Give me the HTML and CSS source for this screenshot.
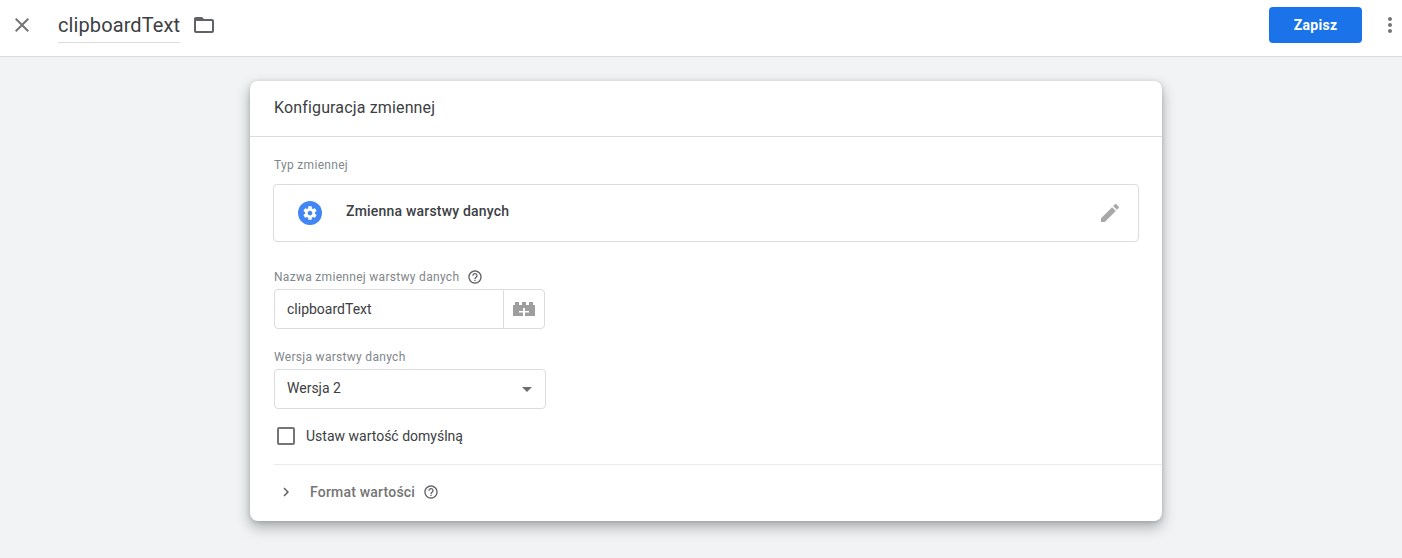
FILE: index.html
```html
<!DOCTYPE html>
<html lang="pl">
<head>
    <meta charset="UTF-8">
    <title>clipboardText</title>
    <link rel="stylesheet" href="styles.css">
</head>
<body>

    <div class="topbar">
        <svg class="close-icon" width="24" height="24" viewBox="0 0 24 24">
            <path d="M19 6.41L17.59 5 12 10.59 6.41 5 5 6.41 10.59 12 5 17.59 6.41 19 12 13.41 17.59 19 19 17.59 13.41 12z"/>
        </svg>
        <div class="name-field">clipboardText</div>
        <svg class="folder-icon" width="24" height="24" viewBox="0 0 24 24">
            <path d="M20 6h-8l-2-2H4c-1.1 0-1.99.9-1.99 2L2 18c0 1.1.9 2 2 2h16c1.1 0 2-.9 2-2V8c0-1.1-.9-2-2-2zm0 12H4V8h16v10z"/>
        </svg>
        <div class="topbar-right">
            <button class="save-btn">Zapisz</button>
            <svg class="more-icon" width="24" height="24" viewBox="0 0 24 24">
                <path d="M12 8c1.1 0 2-.9 2-2s-.9-2-2-2-2 .9-2 2 .9 2 2 2zm0 2c-1.1 0-2 .9-2 2s.9 2 2 2 2-.9 2-2-.9-2-2-2zm0 6c-1.1 0-2 .9-2 2s.9 2 2 2 2-.9 2-2-.9-2-2-2z"/>
            </svg>
        </div>
    </div>

    <div class="main">
        <div class="card">
            <div class="card-header">Konfiguracja zmiennej</div>

            <div class="card-body">
                <div class="label">Typ zmiennej</div>
                <div class="type-box">
                    <span class="type-badge">
                        <svg width="16" height="16" viewBox="0 0 24 24">
                            <path d="M19.43 12.98c.04-.32.07-.64.07-.98s-.03-.66-.07-.98l2.11-1.65c.19-.15.24-.42.12-.64l-2-3.46c-.12-.22-.39-.3-.61-.22l-2.49 1c-.52-.4-1.08-.73-1.69-.98l-.38-2.65C14.46 2.18 14.25 2 14 2h-4c-.25 0-.46.18-.49.42l-.38 2.65c-.61.25-1.17.59-1.69.98l-2.49-1c-.23-.09-.49 0-.61.22l-2 3.46c-.13.22-.07.49.12.64l2.11 1.65c-.04.32-.07.65-.07.98s.03.66.07.98l-2.11 1.65c-.19.15-.24.42-.12.64l2 3.46c.12.22.39.3.61.22l2.49-1c.52.4 1.08.73 1.69.98l.38 2.65c.03.24.24.42.49.42h4c.25 0 .46-.18.49-.42l.38-2.65c.61-.25 1.17-.59 1.69-.98l2.49 1c.23.09.49 0 .61-.22l2-3.46c.12-.22.07-.49-.12-.64l-2.11-1.65zM12 15.5c-1.93 0-3.5-1.57-3.5-3.5s1.57-3.5 3.5-3.5 3.5 1.57 3.5 3.5-1.57 3.5-3.5 3.5z"/>
                        </svg>
                    </span>
                    <span class="type-name">Zmienna warstwy danych</span>
                    <svg class="edit-icon" width="24" height="24" viewBox="0 0 24 24">
                        <path d="M3 17.25V21h3.75L17.81 9.94l-3.75-3.75L3 17.25zM20.71 7.04c.39-.39.39-1.02 0-1.41l-2.34-2.34c-.39-.39-1.02-.39-1.41 0l-1.83 1.83 3.75 3.75 1.83-1.83z"/>
                    </svg>
                </div>

                <div class="label label-help">
                    Nazwa zmiennej warstwy danych
                    <svg class="help-icon" width="16" height="16" viewBox="0 0 24 24">
                        <path d="M11 18h2v-2h-2v2zm1-16C6.48 2 2 6.48 2 12s4.48 10 10 10 10-4.48 10-10S17.52 2 12 2zm0 18c-4.41 0-8-3.59-8-8s3.59-8 8-8 8 3.59 8 8-3.59 8-8 8zm0-14c-2.21 0-4 1.79-4 4h2c0-1.1.9-2 2-2s2 .9 2 2c0 2-3 1.75-3 5h2c0-2.25 3-2.5 3-5 0-2.21-1.79-4-4-4z"/>
                    </svg>
                </div>
                <div class="name-input">
                    <span class="name-input-text">clipboardText</span>
                    <span class="name-input-btn">
                        <svg width="22" height="14" viewBox="0 0 22 14">
                            <path d="M2 0h4v3h3V0h4v3h3V0h4v3h2v11H0V3h2z"/>
                            <path class="brick-plus" d="M10 6h2v3h4v1.500h-4V14h-2v-3.500H6V9h4z"/>
                        </svg>
                    </span>
                </div>

                <div class="label label-version">Wersja warstwy danych</div>
                <div class="select-box">
                    Wersja 2
                    <span class="select-arrow"></span>
                </div>

                <div class="check-row">
                    <span class="checkbox"></span>
                    Ustaw wartość domyślną
                </div>
            </div>

            <div class="format-row">
                <svg class="chevron-icon" width="18" height="18" viewBox="0 0 24 24">
                    <path d="M10 6L8.590 7.410 13.170 12l-4.580 4.590L10 18l6-6z"/>
                </svg>
                <span class="format-title">Format wartości</span>
                <svg class="help-icon" width="16" height="16" viewBox="0 0 24 24">
                    <path d="M11 18h2v-2h-2v2zm1-16C6.480 2 2 6.480 2 12s4.480 10 10 10 10-4.480 10-10S17.520 2 12 2zm0 18c-4.410 0-8-3.590-8-8s3.590-8 8-8 8 3.590 8 8-3.590 8-8 8zm0-14c-2.210 0-4 1.790-4 4h2c0-1.100.9-2 2-2s2 .9 2 2c0 2-3 1.750-3 5h2c0-2.250 3-2.500 3-5 0-2.210-1.790-4-4-4z"/>
                </svg>
            </div>
        </div>
    </div>

</body>
</html>
```

FILE: styles.css
```css
* {
    margin: 0;
    padding: 0;
    box-sizing: border-box;
}

html, body {
    height: 100%;
    overflow: hidden;
}

body {
    background: #f1f3f4;
    color: #202124;
    font-family: Roboto, "Liberation Sans", sans-serif;
    font-size: 14px;
}

svg {
    display: block;
    flex: none;
}

/* top bar */
.topbar {
    display: flex;
    align-items: center;
    height: 57px;
    padding: 0 0 7px 10px;
    background: #fff;
    border-bottom: 1px solid #dadce0;
}

.close-icon {
    fill: #757575;
    margin-right: 24px;
}

.name-field {
    height: 36px;
    font-size: 20px;
    line-height: 36px;
    letter-spacing: 0.1px;
    color: #3c4043;
    border-bottom: 1px solid #dadce0;
}

.folder-icon {
    fill: #5f6368;
    margin-left: 12px;
}

.topbar-right {
    display: flex;
    align-items: center;
    margin-left: auto;
}

.save-btn {
    width: 93px;
    height: 36px;
    background: #1a73e8;
    color: #fff;
    border: none;
    border-radius: 4px;
    font-family: inherit;
    font-size: 14px;
    font-weight: 700;
    letter-spacing: 0.3px;
}

.more-icon {
    fill: #757575;
    margin-left: 16px;
}

/* card */
.main {
    display: flex;
    justify-content: center;
    padding: 24px 0 0 10px;
}

.card {
    width: 912px;
    height: 440px;
    background: #fff;
    border-radius: 8px;
    box-shadow: 0 6px 14px rgba(60, 64, 67, 0.4), 0 1px 4px rgba(60, 64, 67, 0.2);
}

.card-header {
    height: 56px;
    padding: 17px 24px 0;
    font-size: 16px;
    line-height: 20px;
    letter-spacing: 0.15px;
    color: #3c4043;
    border-bottom: 1px solid #dadce0;
}

.card-body {
    height: 328px;
    margin-left: 24px;
    padding-top: 21px;
    border-bottom: 1px solid #e8eaed;
}

.label {
    font-size: 12px;
    line-height: 14px;
    letter-spacing: 0.3px;
    color: #80868b;
}

.type-box {
    display: flex;
    align-items: center;
    width: 866px;
    height: 58px;
    margin: 12px 0 0 -1px;
    padding: 0 16px 0 24px;
    border: 1px solid #dadce0;
    border-radius: 4px;
}

.type-badge {
    display: flex;
    align-items: center;
    justify-content: center;
    width: 24px;
    height: 24px;
    border-radius: 50%;
    background: #4285f4;
    fill: #fff;
}

.type-name {
    margin: -4px 0 0 24px;
    font-weight: 500;
    line-height: 20px;
    letter-spacing: 0.2px;
    color: #3c4043;
}

.edit-icon {
    fill: #a8a8a8;
    margin-left: auto;
}

.label-help {
    display: flex;
    align-items: center;
    gap: 8px;
    height: 16px;
    margin-top: 27px;
}

.help-icon {
    fill: #5f6368;
}

.name-input {
    display: flex;
    width: 271px;
    height: 40px;
    margin-top: 4px;
    border: 1px solid #dadce0;
    border-radius: 4px;
}

.name-input-text {
    flex: 1;
    padding-left: 12px;
    line-height: 38px;
    color: #3c4043;
}

.name-input-btn {
    display: flex;
    align-items: center;
    justify-content: center;
    width: 41px;
    border-left: 1px solid #dadce0;
    fill: #9e9e9e;
}

.brick-plus {
    fill: #fff;
}

.label-version {
    margin-top: 21px;
}

.select-box {
    position: relative;
    width: 272px;
    height: 40px;
    margin-top: 5px;
    padding-left: 12px;
    line-height: 37px;
    color: #3c4043;
    border: 1px solid #dadce0;
    border-radius: 4px;
}

.select-arrow {
    position: absolute;
    right: 13px;
    top: 17px;
    border-left: 5px solid transparent;
    border-right: 5px solid transparent;
    border-top: 5px solid #6b6f73;
}

.check-row {
    display: flex;
    align-items: center;
    height: 18px;
    margin: 18px 0 0 3px;
    color: #3c4043;
}

.checkbox {
    width: 18px;
    height: 18px;
    margin-right: 11px;
    border: 2px solid #757575;
    border-radius: 2px;
}

.format-row {
    display: flex;
    align-items: center;
    height: 54px;
    padding-left: 27px;
}

.chevron-icon {
    fill: #5f6368;
}

.format-title {
    margin: 0 8px 0 15px;
    font-weight: 500;
    letter-spacing: 0.2px;
    color: #757575;
}
```
